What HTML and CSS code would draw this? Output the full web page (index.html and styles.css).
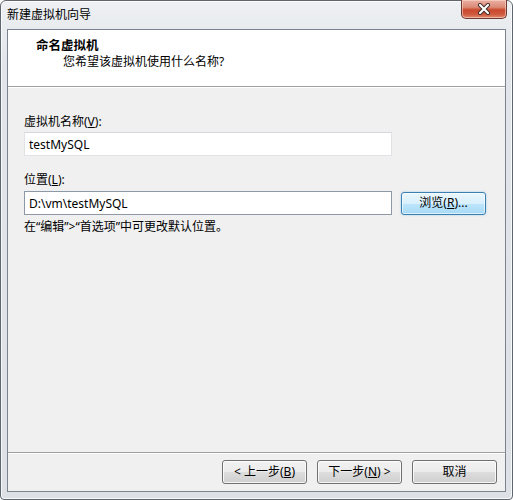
FILE: index.html
```html
<!DOCTYPE html>
<html lang="zh-CN">
<head>
<meta charset="utf-8">
<title>新建虚拟机向导</title>
<link rel="stylesheet" href="styles.css">
</head>
<body>
<div class="window">
  <div class="titlebar">
    <span class="title">新建虚拟机向导</span>
    <div class="close">
      <svg width="14" height="12" viewBox="0 0 14 12">
        <path d="M3 2 L11 10 M11 2 L3 10" stroke="#3a2a26" stroke-width="4" stroke-linecap="round"/>
        <path d="M3 2 L11 10 M11 2 L3 10" stroke="#ffffff" stroke-width="2.2" stroke-linecap="round"/>
      </svg>
    </div>
  </div>
  <div class="client">
    <div class="header">
      <div class="header-title">命名虚拟机</div>
      <div class="header-sub">您希望该虚拟机使用什么名称?</div>
    </div>
    <div class="content">
      <div class="label label-first">虚拟机名称(<u>V</u>):</div>
      <input class="textbox textbox-name" type="text" value="testMySQL">
      <div class="label label-second">位置(<u>L</u>):</div>
      <div class="path-row">
        <input class="textbox textbox-path" type="text" value="D:\vm\testMySQL">
        <button class="btn btn-browse" type="button">浏览(<u>R</u>)...</button>
      </div>
      <div class="hint">在“编辑”&gt;“首选项”中可更改默认位置。</div>
    </div>
    <div class="footer">
      <button class="btn" type="button">&lt; 上一步(<u>B</u>)</button>
      <button class="btn" type="button">下一步(<u>N</u>) &gt;</button>
      <button class="btn" type="button">取消</button>
    </div>
  </div>
</div>
</body>
</html>
```

FILE: styles.css
```css
html, body {
  margin: 0;
  padding: 0;
  background: #ffffff;
}

body {
  width: 513px;
  height: 500px;
  font-family: "Noto Sans", "Noto Sans CJK SC", sans-serif;
  font-size: 12px;
  color: #000000;
}

.window {
  position: relative;
  box-sizing: border-box;
  width: 513px;
  height: 500px;
  border: 1px solid #5f666e;
  border-radius: 6px 6px 4px 4px;
  background: linear-gradient(#eef0f3, #e2e6ea 60px, #dde1e6);
  box-shadow: inset 0 0 0 1px rgba(255, 255, 255, 0.75);
  padding: 0 6px 7px 6px;
  display: flex;
  flex-direction: column;
}

.titlebar {
  height: 28px;
  display: flex;
  align-items: center;
  line-height: 16px;
}

.title {
  color: #000000;
  font-size: 12px;
}

.close {
  position: absolute;
  top: -1px;
  right: 5px;
  width: 44px;
  height: 18px;
  border: 1px solid #6b3a30;
  border-top: none;
  border-radius: 0 0 5px 5px;
  background: linear-gradient(#eab0a3 0%, #dc8a77 40%, #c9482d 55%, #cf5b3f 80%, #e08a6f 100%);
  box-shadow: inset 0 0 0 1px rgba(255, 220, 210, 0.55);
  display: flex;
  align-items: center;
  justify-content: center;
}

.close svg {
  display: block;
}

.client {
  flex: 1;
  border: 1px solid #7b848e;
  background: #f0f0f0;
  display: flex;
  flex-direction: column;
}

.header {
  height: 56px;
  box-sizing: content-box;
  background: #ffffff;
  border-bottom: 1px solid #a0a0a0;
  padding-top: 0;
  line-height: 16px;
}

.header-title {
  padding: 8px 0 0 28px;
  font-weight: bold;
  font-size: 12.5px;
}

.header-sub {
  padding-left: 55px;
}

.content {
  flex: 1;
  border-top: 1px solid #ffffff;
  padding: 0 16px;
  line-height: 16px;
}

.label-first {
  margin-top: 26px;
  margin-bottom: 2px;
}

.label-second {
  margin-top: 16px;
  margin-bottom: 3px;
}

.textbox {
  display: block;
  box-sizing: border-box;
  width: 368px;
  height: 24px;
  margin: 0;
  padding: 0 4px;
  background: #ffffff;
  font-family: "Noto Sans", "Noto Sans CJK SC", sans-serif;
  font-size: 12px;
  color: #000000;
  outline: none;
}

.textbox-name {
  border: 1px solid #e0e2e6;
  border-top-color: #d4d7dc;
}

.textbox-path {
  border: 1px solid #8d99a6;
}

.path-row {
  display: flex;
  align-items: center;
  gap: 9px;
}

.hint {
  margin-top: 4px;
}

.btn {
  box-sizing: border-box;
  width: 85px;
  height: 24px;
  margin: 0;
  padding: 0;
  border: 1px solid #707070;
  border-radius: 3px;
  background: linear-gradient(#f2f2f2 0%, #ebebeb 50%, #dddddd 50%, #cfcfcf 100%);
  box-shadow: inset 0 0 0 1px rgba(255, 255, 255, 0.8);
  font-family: "Noto Sans", "Noto Sans CJK SC", sans-serif;
  font-size: 12px;
  color: #000000;
  line-height: 16px;
}

.btn-browse {
  height: 23px;
  border-color: #3c7fb1;
  background: linear-gradient(#eaf6fd 0%, #d9f0fc 50%, #bee6fd 50%, #a7d9f5 100%);
  box-shadow: inset 0 0 0 1px rgba(255, 255, 255, 0.6), 0 0 2px rgba(60, 160, 230, 0.5);
}

.footer {
  border-top: 1px solid #a0a0a0;
  box-shadow: inset 0 1px 0 #ffffff;
  padding: 7px 8px 7px 8px;
  display: flex;
  justify-content: flex-end;
  gap: 10px;
}
```
